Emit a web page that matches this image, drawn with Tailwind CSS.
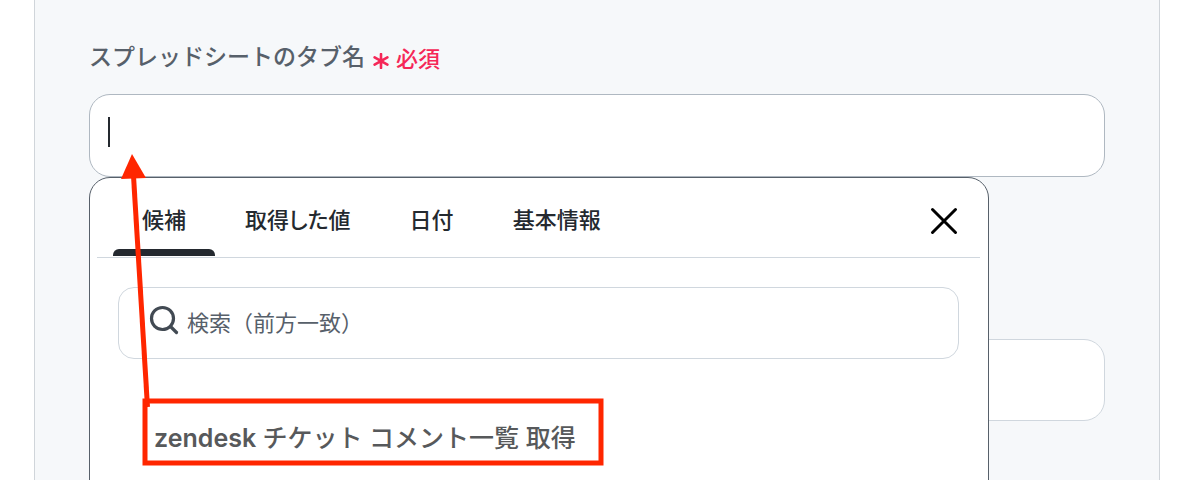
<!DOCTYPE html>
<html lang="ja">
  <head>
    <meta charset="UTF-8" />
    <meta name="viewport" content="width=device-width, initial-scale=1.0" />
    <title>スプレッドシートのタブ名</title>
    <script src="https://cdn.jsdelivr.net/npm/@tailwindcss/browser@4"></script>
  </head>
  <body class="bg-white font-['Inter','Noto_Sans_CJK_JP',sans-serif]">
    <main class="relative mx-[34px] h-screen overflow-hidden border-x border-[#d0d5da] bg-[#f6f8fa] px-[54px] pt-[39px]">
      <div class="mb-[19px] flex h-9 items-center gap-2">
        <label for="tab-name" class="text-[23px] font-medium text-[#57606a]">スプレッドシートのタブ名</label>
        <span class="flex items-center gap-[7px] pt-1 text-[22px] font-medium text-[#f52757]">
          <svg class="mt-1 size-4" viewBox="0 0 16 16" fill="none" stroke="currentColor" stroke-width="2.6" stroke-linecap="round" aria-hidden="true">
            <path d="M8 1v14M1.6 4.4l12.8 7.2M14.4 4.4L1.6 11.6" />
          </svg>
          必須
        </span>
      </div>

      <div class="relative">
        <input id="tab-name" type="text" class="block h-[83px] w-full rounded-[21px] border border-[#afb8c1] bg-white px-[18px] text-[22px] outline-none" />
        <!-- Caret -->
        <span class="absolute top-[23px] left-[19px] h-[30px] w-0.5 bg-[#24292f]"></span>

        <!-- Suggestion panel -->
        <div class="absolute top-full left-0 z-10 h-screen w-[900px] max-w-full rounded-t-[21px] border border-[#57606a] bg-white pr-2 pl-[7px]">
          <div class="flex h-20 items-center gap-px border-b border-[#d0d7de] pl-4 text-[22px] font-medium text-[#24292f]" role="tablist">
            <button type="button" role="tab" aria-selected="true" class="relative h-full px-[29px] pt-1.5 [font-feature-settings:'palt']">
              候補
              <span class="absolute inset-x-0 bottom-px h-[7px] rounded-t-md bg-[#24292f]"></span>
            </button>
            <button type="button" role="tab" class="h-full px-[29px] pt-1.5 [font-feature-settings:'palt']">取得した値</button>
            <button type="button" role="tab" class="h-full px-[29px] pt-1.5 [font-feature-settings:'palt']">日付</button>
            <button type="button" role="tab" class="h-full px-[29px] pt-1.5 [font-feature-settings:'palt']">基本情報</button>
            <button type="button" aria-label="閉じる" class="mr-[22px] ml-auto flex h-full items-center pt-1.5 text-black">
              <svg class="size-7" viewBox="0 0 28 28" fill="none" stroke="currentColor" stroke-width="3" stroke-linecap="round" aria-hidden="true">
                <path d="M2.5 2.5l23 23M25.5 2.5l-23 23" />
              </svg>
            </button>
          </div>

          <label class="mx-[21px] mt-[29px] flex h-[72px] items-center gap-2 rounded-2xl border border-[#d0d7de] pl-[30px] text-[#424a53]">
            <svg class="mb-1.5 size-[30px] shrink-0" viewBox="0 0 30 30" fill="none" stroke="currentColor" stroke-width="3.2" stroke-linecap="round" aria-hidden="true">
              <circle cx="13.5" cy="13.5" r="11" />
              <path d="M21.5 21.5l6 6" />
            </svg>
            <input type="text" aria-label="検索" placeholder="検索（前方一致）" class="min-w-0 flex-1 text-[22px] text-[#57606a] outline-none placeholder:text-[#57606a]" />
          </label>

          <button type="button" class="mt-[61px] ml-[57px] block h-9 text-[25px] leading-9 font-medium text-[#57595b]"><span class="font-semibold">zendesk </span>チケット コメント一覧 取得</button>
        </div>
      </div>

      <input type="text" aria-label="値" class="mt-[162px] block h-[82px] w-full rounded-[21px] border border-[#d0d7de] bg-white px-[18px] text-[22px]" />
    </main>

    <!-- Red arrow and frame -->
    <svg class="pointer-events-none absolute top-0 left-0 z-20" width="620" height="480" fill="none" stroke="#ff2600" stroke-width="5" aria-hidden="true">
      <path d="M147.500 407L133.500 176" />
      <path d="M132 154L121 179L146 178Z" fill="#ff2600" stroke="none" />
      <rect x="145" y="401" width="456" height="62" />
    </svg>
  </body>
</html>
